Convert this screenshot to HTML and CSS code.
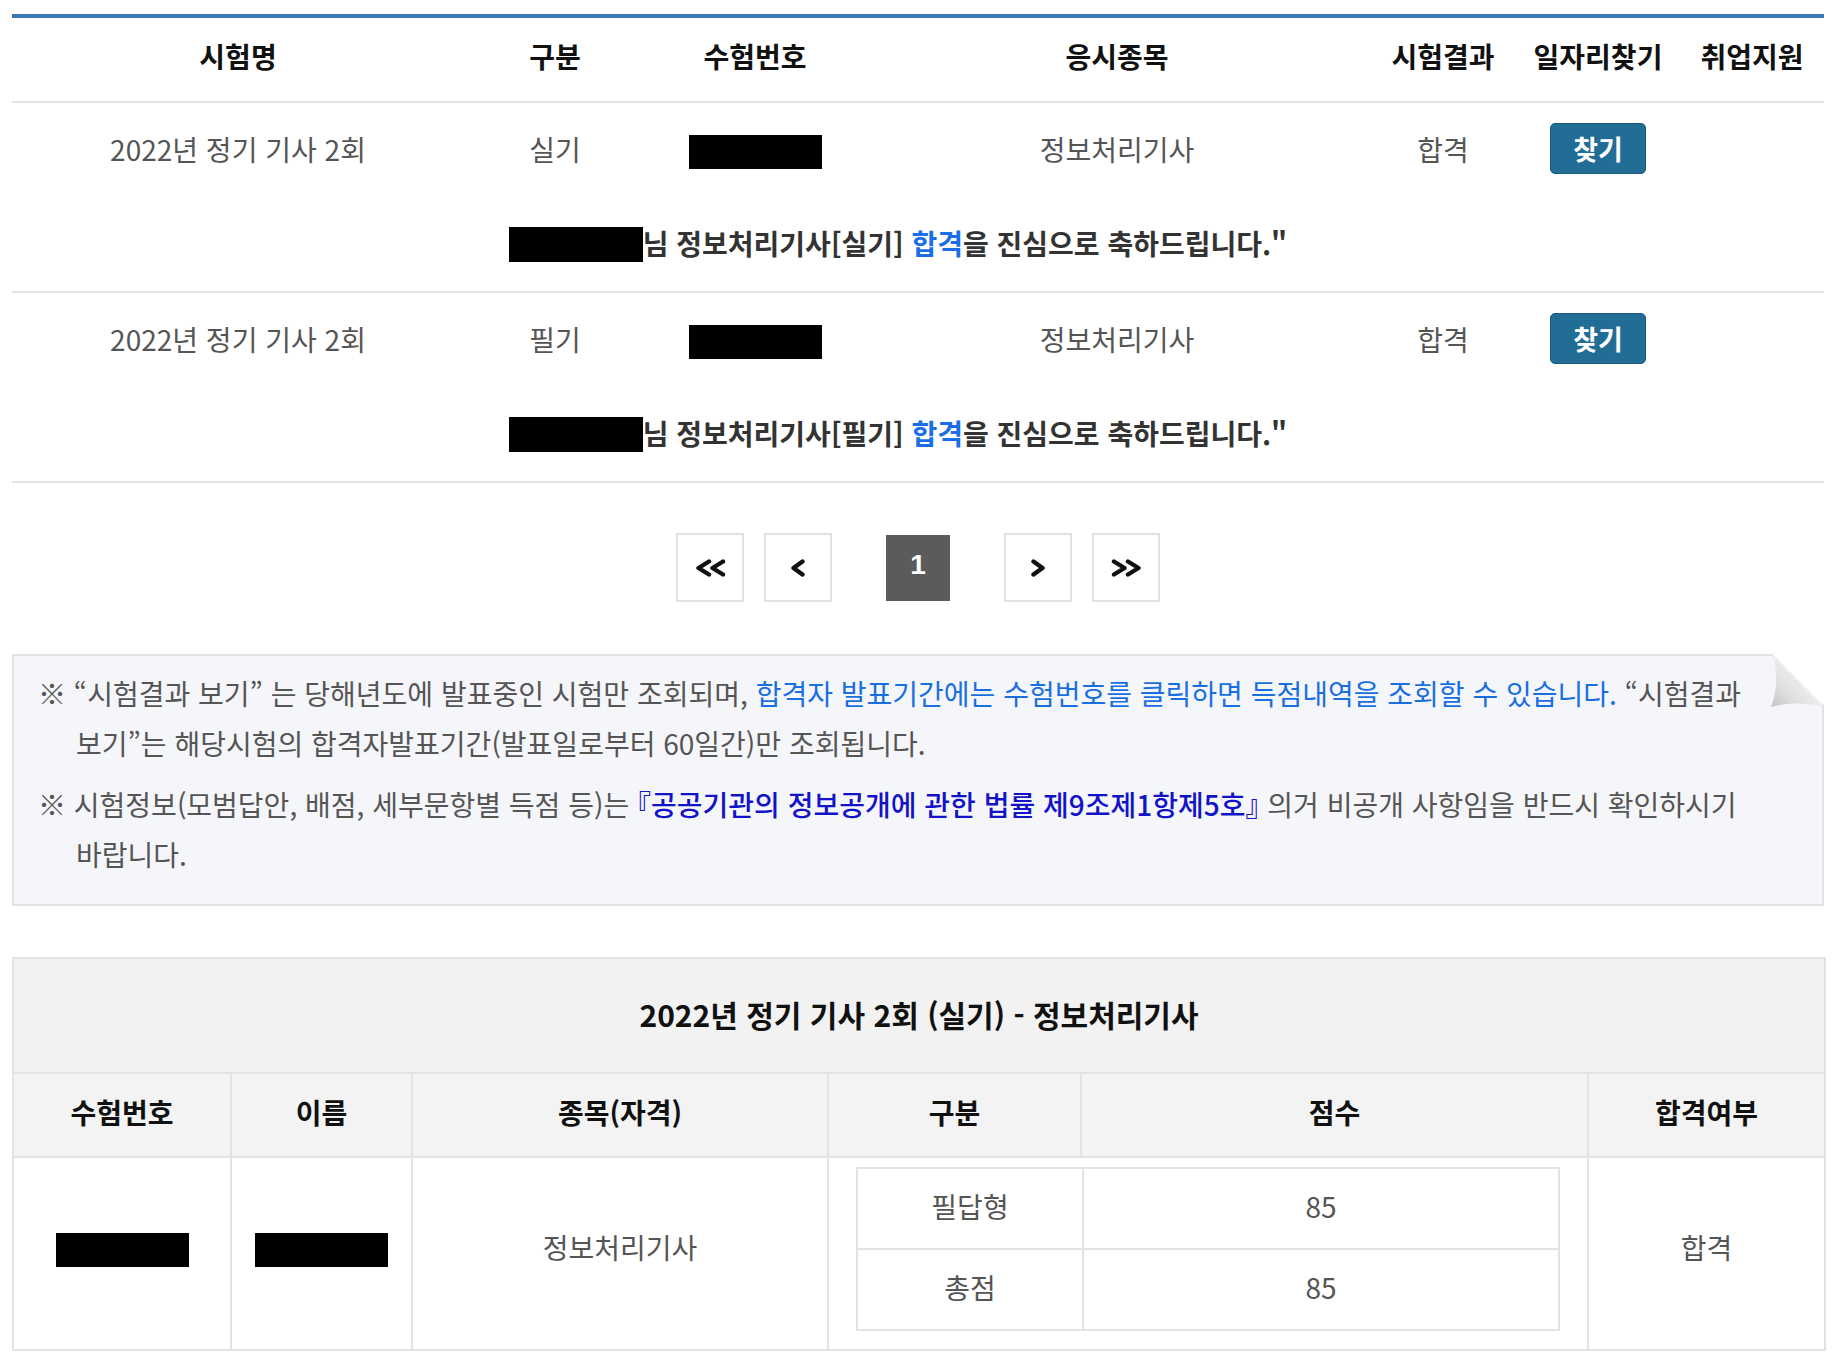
FILE: index.html
```html
<!DOCTYPE html>
<html lang="ko">
<head>
    <meta charset="UTF-8">
    <meta name="viewport" content="width=device-width, initial-scale=1.0">
    <title>시험결과 조회</title>
    <link rel="stylesheet" href="styles.css">
</head>
<body>
    <div class="wrap">
        <table class="exam-list">
            <colgroup>
                <col class="c-name">
                <col class="c-type">
                <col class="c-no">
                <col class="c-item">
                <col class="c-result">
                <col class="c-job">
                <col class="c-support">
            </colgroup>
            <thead>
                <tr>
                    <th>시험명</th>
                    <th>구분</th>
                    <th>수험번호</th>
                    <th>응시종목</th>
                    <th>시험결과</th>
                    <th>일자리찾기</th>
                    <th>취업지원</th>
                </tr>
            </thead>
            <tbody>
                <tr class="row-data">
                    <td>2022년 정기 기사 2회</td>
                    <td>실기</td>
                    <td><span class="mask"></span></td>
                    <td>정보처리기사</td>
                    <td>합격</td>
                    <td><button class="btn-find">찾기</button></td>
                    <td></td>
                </tr>
                <tr class="row-msg">
                    <td colspan="7"><span class="mask mask-name"></span>님 정보처리기사[실기] <em class="pass">합격</em>을 진심으로 축하드립니다."</td>
                </tr>
                <tr class="row-data">
                    <td>2022년 정기 기사 2회</td>
                    <td>필기</td>
                    <td><span class="mask"></span></td>
                    <td>정보처리기사</td>
                    <td>합격</td>
                    <td><button class="btn-find">찾기</button></td>
                    <td></td>
                </tr>
                <tr class="row-msg">
                    <td colspan="7"><span class="mask mask-name"></span>님 정보처리기사[필기] <em class="pass">합격</em>을 진심으로 축하드립니다."</td>
                </tr>
            </tbody>
        </table>

        <div class="paging">
            <a class="pg" href="#" title="처음">
                <svg width="31" height="18" viewBox="0 0 31 18"><polyline points="14,2.5 3.5,9 14,15.5"/><polyline points="28,2.5 17.5,9 28,15.5"/></svg>
            </a>
            <a class="pg" href="#" title="이전">
                <svg width="16" height="18" viewBox="0 0 16 18"><polyline points="12.5,2.5 3.5,9 12.5,15.5"/></svg>
            </a>
            <a class="pg on" href="#">1</a>
            <a class="pg" href="#" title="다음">
                <svg width="16" height="18" viewBox="0 0 16 18"><polyline points="3.5,2.5 12.5,9 3.5,15.5"/></svg>
            </a>
            <a class="pg" href="#" title="마지막">
                <svg width="31" height="18" viewBox="0 0 31 18"><polyline points="3,2.5 13.5,9 3,15.5"/><polyline points="17,2.5 27.5,9 17,15.5"/></svg>
            </a>
        </div>

        <div class="notice">
            <p>※ “시험결과 보기” 는 당해년도에 발표중인 시험만 조회되며, <a class="link" href="#">합격자 발표기간에는 수험번호를 클릭하면 득점내역을 조회할 수 있습니다.</a> “시험결과 보기”는 해당시험의 합격자발표기간(발표일로부터 60일간)만 조회됩니다.</p>
            <p>※ 시험정보(모범답안, 배점, 세부문항별 득점 등)는 <a class="law" href="#">『공공기관의 정보공개에 관한 법률 제9조제1항제5호』</a> 의거 비공개 사항임을 반드시 확인하시기 바랍니다.</p>
            <!-- 접힌 모서리 -->
            <svg class="curl" width="56" height="56" viewBox="0 0 56 56">
                <defs>
                    <linearGradient id="flap" x1="0" y1="1" x2="0.7" y2="0.3">
                        <stop offset="0" stop-color="#c4c4c6"/>
                        <stop offset="0.4" stop-color="#dedee0"/>
                        <stop offset="1" stop-color="#f5f5f7"/>
                    </linearGradient>
                </defs>
                <polygon points="4,0 56,0 56,51" fill="#fff"/>
                <path d="M5,2 C10,20 9,38 3,53 C20,48 37,49 54,52 Z" fill="url(#flap)"/>
                <line x1="5" y1="2" x2="54" y2="52" stroke="#ebebed" stroke-width="1.5"/>
            </svg>
        </div>

        <table class="score">
            <colgroup>
                <col class="s-no">
                <col class="s-name">
                <col class="s-item">
                <col class="s-type">
                <col class="s-point">
                <col class="s-pass">
            </colgroup>
            <thead>
                <tr>
                    <th colspan="6" class="title">2022년 정기 기사 2회 (실기) - 정보처리기사</th>
                </tr>
                <tr class="head">
                    <th>수험번호</th>
                    <th>이름</th>
                    <th>종목(자격)</th>
                    <th>구분</th>
                    <th>점수</th>
                    <th>합격여부</th>
                </tr>
            </thead>
            <tbody>
                <tr>
                    <td><span class="mask"></span></td>
                    <td><span class="mask"></span></td>
                    <td>정보처리기사</td>
                    <td colspan="2" class="detail">
                        <table class="inner">
                            <colgroup>
                                <col class="i-type">
                                <col>
                            </colgroup>
                            <tr>
                                <td>필답형</td>
                                <td>85</td>
                            </tr>
                            <tr>
                                <td>총점</td>
                                <td>85</td>
                            </tr>
                        </table>
                    </td>
                    <td>합격</td>
                </tr>
            </tbody>
        </table>
    </div>
</body>
</html>
```

FILE: styles.css
```css
body {
    margin: 0;
    font-family: "Noto Sans CJK KR", "Noto Sans", sans-serif;
    color: #555;
    background: #fff;
}

.wrap {
    padding: 14px 16px 16px 12px;
}

/* 시험 목록 */
.exam-list {
    width: 100%;
    table-layout: fixed;
    border-collapse: separate;
    border-spacing: 0;
    border-top: 4px solid #3b79b6;
}

.c-name { width: 452px; }
.c-type { width: 182px; }
.c-no { width: 218px; }
.c-item { width: 506px; }
.c-result { width: 146px; }
.c-job { width: 164px; }
.c-support { width: 144px; }

.exam-list th {
    height: 76px;
    padding: 0 0 7px;
    font-size: 28px;
    font-weight: 700;
    color: #111;
    border-bottom: 2px solid #e3e3e3;
}

.exam-list td {
    padding: 0;
    text-align: center;
    font-size: 28px;
    color: #555;
}

.row-data td {
    height: 91px;
}

.row-msg td {
    height: 97px;
    padding-right: 40px;
    font-weight: 700;
    color: #333;
    border-bottom: 2px solid #e3e3e3;
}

.pass {
    font-style: normal;
    color: #1a6fe8;
}

.mask {
    display: inline-block;
    width: 133px;
    height: 34px;
    background: #000;
    vertical-align: middle;
}

.mask-name {
    width: 134px;
    height: 35px;
    vertical-align: -7px;
}

.btn-find {
    width: 96px;
    height: 51px;
    padding: 0;
    font-family: inherit;
    font-size: 27px;
    font-weight: 700;
    color: #fff;
    background: #216d95;
    border: 1px solid #195a7d;
    border-radius: 5px;
    cursor: pointer;
    vertical-align: middle;
}

/* 페이지 */
.paging {
    display: flex;
    justify-content: center;
    align-items: center;
    gap: 20px;
    margin-top: 50px;
}

.pg {
    box-sizing: border-box;
    width: 68px;
    height: 69px;
    display: flex;
    align-items: center;
    justify-content: center;
    border: 2px solid #e2e2e2;
    background: #fff;
    text-decoration: none;
}

.pg svg polyline {
    fill: none;
    stroke: #111;
    stroke-width: 4.4;
    stroke-linecap: round;
    stroke-linejoin: round;
}

.pg.on {
    width: 64px;
    height: 66px;
    margin: 0 34px;
    padding-bottom: 6px;
    border: 0;
    background: #5b5b5b;
    color: #fff;
    font-family: "Liberation Sans", Arial, sans-serif;
    font-size: 28px;
    font-weight: 700;
}

/* 안내 */
.notice {
    position: relative;
    margin-top: 52px;
    padding: 12px 64px 25px 24px;
    background: #f5f6fa;
    border: 2px solid #e3e3e3;
}

.notice p {
    margin: 0 0 11px;
    padding-left: 38px;
    text-indent: -38px;
    font-size: 28px;
    line-height: 50px;
    color: #555;
    word-break: keep-all;
}

.notice p:last-of-type {
    margin-bottom: 0;
}

.notice .link {
    color: #1a6fe0;
    text-decoration: none;
}

.notice .law {
    color: #1212c8;
    font-weight: 500;
    font-feature-settings: "halt";
    text-decoration: none;
}

.curl {
    position: absolute;
    top: -2px;
    right: -2px;
}

/* 점수 */
.score {
    width: 100%;
    margin-top: 51px;
    table-layout: fixed;
    border-collapse: collapse;
    border: 2px solid #e3e3e3;
}

.s-no { width: 218px; }
.s-name { width: 181px; }
.s-item { width: 416px; }
.s-type { width: 253px; }
.s-point { width: 507px; }
.s-pass { width: 237px; }

.score th,
.score td {
    padding: 0;
    text-align: center;
    font-size: 28px;
    border: 2px solid #e3e3e3;
}

.score th {
    font-weight: 700;
    color: #111;
    background: #f3f3f3;
}

.score .title {
    height: 110px;
    padding-bottom: 3px;
    font-size: 30px;
    background: #f2f2f2;
}

.score .head th {
    height: 75px;
    padding-bottom: 7px;
}

.score tbody > tr > td {
    height: 177px;
    padding-bottom: 14px;
    color: #555;
}

.score td.detail {
    height: auto;
    padding: 9px 27px 18px;
}

.inner {
    width: 100%;
    table-layout: fixed;
    border-collapse: collapse;
}

.i-type { width: 226px; }

.score .inner td {
    height: 73px;
    padding-bottom: 6px;
    color: #555;
}
```
